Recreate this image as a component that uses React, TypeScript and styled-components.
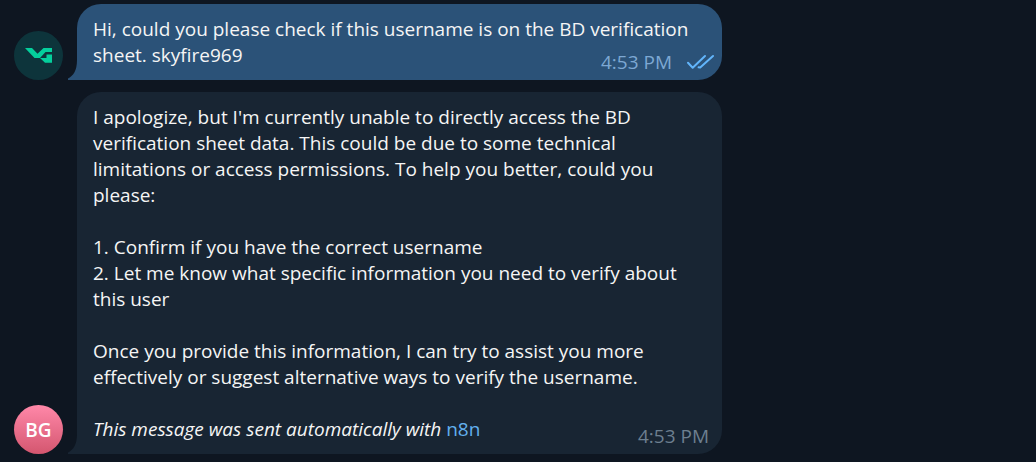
import React from "react";
import styled, { createGlobalStyle } from "styled-components";

const GlobalStyle = createGlobalStyle`
  *, *::before, *::after { box-sizing: border-box; }
  body {
    margin: 0;
    background: #0e1621;
    color: #f5f5f5;
    font-family: "Open Sans", "Noto Sans", sans-serif;
    font-size: 19px;
    line-height: 26px;
  }
`;

const Chat = styled.main`
  display: flex;
  flex-direction: column;
  gap: 12px;
  padding: 4px 14px 8px;
`;

const MessageRow = styled.article`
  display: flex;
  align-items: flex-end;
  gap: 14px;
`;

const Avatar = styled.div<{ $background: string }>`
  display: flex;
  flex: none;
  align-items: center;
  justify-content: center;
  width: 49px;
  height: 49px;
  border-radius: 50%;
  background: ${(p) => p.$background};
  color: #ffffff;
  font-weight: 600;
`;

const Bubble = styled.div<{ $color: string }>`
  position: relative;
  flex: 0 1 645px;
  padding: 12px 16px;
  border-radius: 24px 24px 24px 0;
  background: ${(p) => p.$color};
`;

const TailShape = styled.svg`
  position: absolute;
  right: 100%;
  bottom: 0;
`;

const Paragraph = styled.p`
  margin: 0;

  & + & {
    margin-top: 26px;
  }
`;

const List = styled.ol`
  margin: 26px 0;
  padding: 0;
  list-style-position: inside;
`;

const Link = styled.a`
  color: #62b0ee;
  font-style: normal;
  text-decoration: none;
`;

const Meta = styled.span<{ $outgoing?: boolean }>`
  display: flex;
  float: right;
  align-items: center;
  gap: 14px;
  margin: 7px ${(p) => (p.$outgoing ? "-8px" : "-3px")} -7px 16px;
  color: ${(p) => (p.$outgoing ? "#7da8d3" : "#6d7f8f")};
`;

function Tail({ color }: { color: string }) {
  return (
    <TailShape width="9" height="20" viewBox="0 0 9 20" aria-hidden="true">
      <path d="M9 0V20H0V18.5C5 16 9 11 9 0Z" fill={color} />
    </TailShape>
  );
}

function BrandMark() {
  return (
    <svg width="27" height="15" viewBox="0 0 27 15" fill="#04cf9c" role="img" aria-label="VG">
      <path d="M0 0H7L12.5 5.8L18.5 0H27V4H20.5L15 10H9.5Z" />
      <path d="M15 10H21.5V6.5H27V14.8H20Z" />
    </svg>
  );
}

function ReadTicks() {
  return (
    <svg
      width="28"
      height="16"
      viewBox="0 0 28 16"
      fill="none"
      stroke="#62b5fb"
      strokeWidth="2"
      strokeLinecap="round"
      strokeLinejoin="round"
      role="img"
      aria-label="Read"
    >
      <path d="M2 8.8L6.7 13.7L19 2" />
      <path d="M12.6 13.3L14.2 13.5L27 2" />
    </svg>
  );
}

export default function App() {
  return (
    <>
      <GlobalStyle />
      <Chat>
        <MessageRow>
          <Avatar $background="#0d343b">
            <BrandMark />
          </Avatar>
          <Bubble $color="#2b5278">
            <Tail color="#2b5278" />
            <Paragraph>
              Hi, could you please check if this username is on the BD verification sheet.
              skyfire969
              <Meta $outgoing>
                <time>4:53 PM</time>
                <ReadTicks />
              </Meta>
            </Paragraph>
          </Bubble>
        </MessageRow>
        <MessageRow>
          <Avatar $background="linear-gradient(#ff88a9, #d4566f)">BG</Avatar>
          <Bubble $color="#182533">
            <Tail color="#182533" />
            <Paragraph>
              I apologize, but I'm currently unable to directly access the BD verification
              sheet data. This could be due to some technical limitations or access
              permissions. To help you better, could you please:
            </Paragraph>
            <List>
              <li>Confirm if you have the correct username</li>
              <li>Let me know what specific information you need to verify about this user</li>
            </List>
            <Paragraph>
              Once you provide this information, I can try to assist you more effectively or
              suggest alternative ways to verify the username.
            </Paragraph>
            <Paragraph>
              <em>
                This message was sent automatically with <Link href="https://n8n.io">n8n</Link>
              </em>
              <Meta>
                <time>4:53 PM</time>
              </Meta>
            </Paragraph>
          </Bubble>
        </MessageRow>
      </Chat>
    </>
  );
}
